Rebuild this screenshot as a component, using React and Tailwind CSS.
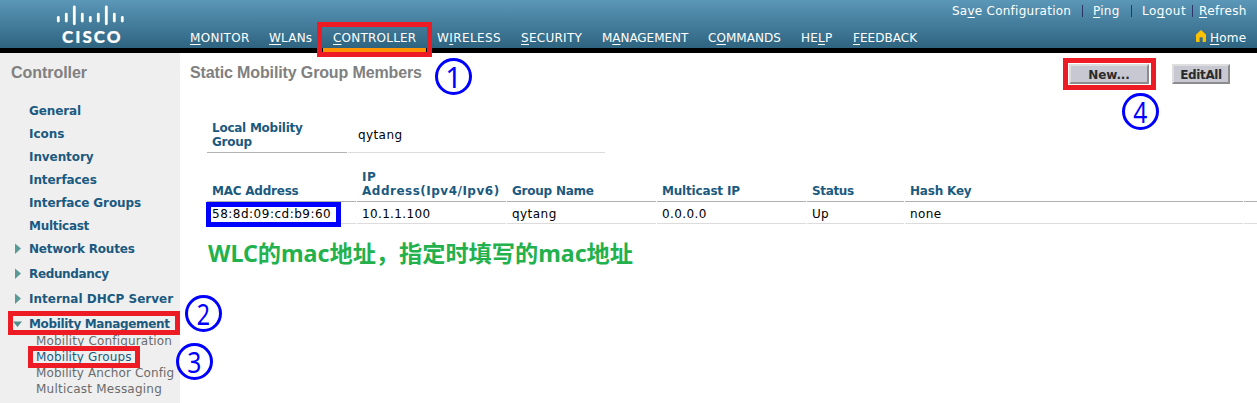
const NAV = [
  { pre: "", key: "M", post: "ONITOR", cls: "w-[79px] tracking-[0.3px]" },
  { pre: "", key: "W", post: "LANs", cls: "w-[64px] tracking-[0.2px]" },
  { pre: "", key: "C", post: "ONTROLLER", cls: "w-[104px] tracking-[0.22px]" },
  { pre: "W", key: "I", post: "RELESS", cls: "w-[84px] tracking-[0.4px]" },
  { pre: "", key: "S", post: "ECURITY", cls: "w-[81px] tracking-[0.28px]" },
  { pre: "M", key: "A", post: "NAGEMENT", cls: "w-[106px] tracking-[-0.05px]" },
  { pre: "C", key: "O", post: "MMANDS", cls: "w-[93px] tracking-[0.05px]" },
  { pre: "HE", key: "L", post: "P", cls: "w-[52px] tracking-[0.2px]" },
  { pre: "", key: "F", post: "EEDBACK", cls: "w-[70px] tracking-[0.05px]" },
];

const LINKS = [
  { label: "General", cls: "tracking-[-0.1px]" },
  { label: "Icons", cls: "tracking-[-0.05px]" },
  { label: "Inventory", cls: "tracking-[-0.08px]" },
  { label: "Interfaces", cls: "tracking-[-0.08px]" },
  { label: "Interface Groups", cls: "tracking-[-0.12px]" },
  { label: "Multicast", cls: "tracking-[-0.28px]" },
];

const GROUPS = [
  { label: "Network Routes", cls: "tracking-[-0.2px]" },
  { label: "Redundancy", cls: "tracking-[-0.35px]" },
  { label: "Internal DHCP Server", cls: "tracking-[0px]" },
  { label: "Mobility Management", cls: "tracking-[-0.35px]", open: true },
];

const SUB = [
  { label: "Mobility Configuration", cls: "tracking-[0.17px] text-[#6b6b6b]" },
  { label: "Mobility Groups", cls: "tracking-[0.12px] text-[#1b5a80]" },
  { label: "Mobility Anchor Config", cls: "tracking-[0.12px] text-[#6b6b6b]" },
  { label: "Multicast Messaging", cls: "tracking-[0.22px] text-[#6b6b6b]" },
];

const COLUMNS = [
  { head: "MAC Address", value: "58:8d:09:cd:b9:60", w: "w-[149px] pl-[5px]", h: "tracking-[-0.23px]", v: "tracking-[0.5px]" },
  { head: "IP Address(Ipv4/Ipv6)", value: "10.1.1.100", w: "w-[149px] pl-[5px]", h: "tracking-[0.5px]", v: "tracking-[0.35px]" },
  { head: "Group Name", value: "qytang", w: "w-[149px] pl-[5px]", h: "tracking-[-0.24px]", v: "tracking-[0.45px]" },
  { head: "Multicast IP", value: "0.0.0.0", w: "w-[149px] pl-[5px]", h: "tracking-[-0.18px]", v: "tracking-[0.4px]" },
  { head: "Status", value: "Up", w: "w-[97px] pl-[5px]", h: "tracking-[-0.35px]", v: "tracking-[0.3px]" },
  { head: "Hash Key", value: "none", w: "w-[338px] pl-[5px]", h: "tracking-[-0.2px]", v: "tracking-[0.4px]" },
  { head: "", value: "", w: "w-[13px]", h: "", v: "" },
];

const UNDER = "underline decoration-1 underline-offset-2";

function HotKey({ pre, k, post }) {
  return (
    <>
      {pre}
      <span className={UNDER}>{k}</span>
      {post}
    </>
  );
}

function Logo() {
  const bars = [
    [58.3, 16, 22.5], [66.3, 12.7, 22.5], [74.3, 5.4, 25.2],
    [82.3, 12.7, 22.5], [90.3, 16, 22.5], [98.3, 12.7, 22.5],
    [106.3, 5.4, 25.2], [114.3, 12.7, 22.5], [122.3, 16, 22.5],
  ];
  return (
    <svg width="190" height="48" className="block shrink-0">
      {bars.map(([x, a, b]) => (
        <line key={x} x1={x} x2={x} y1={a + 1.4} y2={b - 1.4} stroke="#fff" strokeWidth="2.8" strokeLinecap="round" />
      ))}
      <text x="62" y="43" textLength="58.5" fill="#fff" stroke="#fff" strokeWidth="0.2" fontFamily="Lato, sans-serif" fontWeight="900" fontSize="17">
        CISCO
      </text>
    </svg>
  );
}

function Divider({ cls }) {
  return <span className={"h-[12px] w-px bg-[#2b3568] " + cls} />;
}

function Header() {
  return (
    <header className="flex h-[53px] border-b-[5px] border-black bg-linear-to-b from-[#5b97b8] to-[#2e6480] text-[12px] leading-[16px] text-white">
      <Logo />
      <nav className="flex pt-[30px]">
        {NAV.map((n) => (
          <a key={n.post} className={"block shrink-0 whitespace-nowrap " + n.cls}>
            <HotKey pre={n.pre} k={n.key} post={n.post} />
          </a>
        ))}
      </nav>
      <div className="ml-auto flex shrink-0 flex-col items-end pr-[10px] pt-[3px]">
        <div className="flex items-center whitespace-nowrap">
          <a className="w-[130px] tracking-[0.25px]"><HotKey pre="Sa" k="v" post="e Configuration" /></a>
          <Divider cls="mr-[10px]" />
          <a className="w-[38px] tracking-[0.25px]"><HotKey pre="" k="P" post="ing" /></a>
          <Divider cls="mr-[10px]" />
          <a className="w-[50px] tracking-[0.5px]"><HotKey pre="Lo" k="g" post="out" /></a>
          <Divider cls="mr-[6px]" />
          <a className="w-[48px] tracking-[0.35px]"><HotKey pre="" k="R" post="efresh" /></a>
        </div>
        <div className="mt-[11px] flex">
          <svg width="10" height="12" viewBox="0 0 10 12" className="mr-[4px]">
            <path d="M5 0 L10 4.6 V11 Q10 12 9 12 H6.7 V7.2 H3.6 V12 H1 Q0 12 0 11 V4.6 Z" fill="#fcc200" />
          </svg>
          <a className="w-[37px] tracking-[0.2px]"><HotKey pre="" k="H" post="ome" /></a>
        </div>
      </div>
    </header>
  );
}

function Arrow({ open }) {
  return (
    <svg width="29" height="14" className="shrink-0">
      {open ? <path d="M13 3.5 H22 L17.5 9 Z" fill="#4f8f8b" /> : <path d="M15 0.5 L21 5.5 L15 11 Z" fill="#5a9a96" />}
    </svg>
  );
}

function Sidebar() {
  return (
    <aside className="h-[350px] w-[180px] shrink-0 overflow-hidden whitespace-nowrap bg-[#efefef] text-[12px]">
      <h2 className="pl-[11px] pt-[10px] font-['Liberation_Sans'] text-[16px] font-bold leading-[20px] tracking-[-0.05px] text-[#808080]">Controller</h2>
      <ul className="pt-[17px] font-bold text-[#1b5a80]">
        {LINKS.map((l) => (
          <li key={l.label} className={"h-[23px] pl-[29px] leading-[23px] " + l.cls}>{l.label}</li>
        ))}
        {GROUPS.map((g) => (
          <li key={g.label} className={"flex h-[23px] items-center leading-[23px] " + (g.open ? "" : "mb-[2px]")}>
            <Arrow open={g.open} />
            <span className={g.cls}>{g.label}</span>
          </li>
        ))}
      </ul>
      <ul className="-mt-[3px] pl-[36px] leading-[16px]">
        {SUB.map((s) => (
          <li key={s.label} className={s.cls}>{s.label}</li>
        ))}
      </ul>
    </aside>
  );
}

function Button({ label, cls }) {
  return (
    <button className={"flex h-[20px] items-center justify-center border-2 border-b-[#8c8c8c] border-l-[#dedede] border-r-[#8c8c8c] border-t-[#dedede] bg-[#c8c8d3] text-[12px] font-bold leading-[16px] text-[#2b2b2b] " + cls}>
      <span className="pt-[2px]">{label}</span>
    </button>
  );
}

function Main() {
  return (
    <main className="w-[1077px] bg-white text-[12px]">
      <div className="flex h-[66px] items-start pl-[10px] pr-[27px] pt-[10px]">
        <h1 className="whitespace-nowrap font-['Liberation_Sans'] text-[16px] font-bold leading-[20px] tracking-[-0.13px] text-[#808080]">
          Static Mobility Group Members
        </h1>
        <Button label="New..." cls="ml-auto mr-[23px] mt-px w-[80px] tracking-[-0.1px]" />
        <Button label="EditAll" cls="mt-px w-[58px] tracking-[-0.35px]" />
      </div>
      <div className="flex gap-px pl-[27px]">
        <div className="h-[34px] w-[140px] border-b border-[#b4b4b4] pl-[5px] pt-[2px] font-bold leading-[14px] tracking-[-0.25px] text-[#1b5a80]">
          Local Mobility
          <br />
          Group
        </div>
        <div className="h-[34px] w-[257px] border-b border-[#dcdcdc] pl-[10px] pt-[9px] leading-[14px] tracking-[0.4px]">qytang</div>
      </div>
      <div className="mt-[14px] flex gap-px pl-[27px]">
        {COLUMNS.map((c, i) => (
          <div key={i} className={"flex h-[35px] shrink-0 items-end border-b border-[#b0b0b0] pb-[3px] font-bold leading-[14px] text-[#1b5a80] " + c.w + " " + c.h}>
            <span>{c.head}</span>
          </div>
        ))}
      </div>
      <div className="flex gap-px pl-[27px]">
        {COLUMNS.map((c, i) => (
          <div key={i} className={"h-[22px] shrink-0 whitespace-nowrap border-b border-[#dcdcdc] pt-[5px] leading-[14px] text-black " + c.w + " " + c.v}>
            {c.value}
          </div>
        ))}
      </div>
      <p lang="zh-CN" className="whitespace-nowrap pl-[28px] pt-[12px] font-['Noto_Sans','Noto_Sans_CJK_SC',sans-serif] text-[23.2px] font-bold leading-[34px] text-[#22b14c]">
        WLC的mac地址，指定时填写的mac地址
      </p>
    </main>
  );
}

function Step({ n, cls, digit }) {
  return (
    <div className={"absolute flex h-[37px] w-[37px] items-center justify-center rounded-full border-[3px] border-[#0000ff] font-['Noto_Sans'] text-[29px] font-normal leading-[30px] text-[#0000ff] " + cls}>
      <span className={"block " + digit}>{n}</span>
    </div>
  );
}

export default function App() {
  return (
    <div className="relative h-[403px] w-[1257px] overflow-hidden bg-white font-['DejaVu_Sans',sans-serif]">
      <Header />
      <div className="flex">
        <Sidebar />
        <Main />
      </div>
      <div className="absolute left-[323px] top-[48px] h-[4px] w-[103px] bg-[#ff9200]" />
      <div className="absolute left-[317px] top-[22px] h-[35px] w-[115px] border-[5px] border-[#ed1c24]" />
      <div className="absolute left-[1063px] top-[58px] h-[32px] w-[93px] border-[5px] border-[#ed1c24]" />
      <div className="absolute left-[8px] top-[311px] h-[24px] w-[172px] border-[5px] border-[#ed1c24]" />
      <div className="absolute left-[28px] top-[346px] h-[22px] w-[112px] border-[5px] border-[#ed1c24]" />
      <div className="absolute left-[206px] top-[202px] h-[25px] w-[135px] border-[5px] border-[#0000ff]" />
      <Step n="1" cls="left-[435px] top-[58px]" digit="scale-x-100" />
      <Step n="2" cls="left-[185px] top-[295px]" digit="scale-x-[0.8]" />
      <Step n="3" cls="left-[176px] top-[343px]" digit="scale-x-[0.85]" />
      <Step n="4" cls="left-[1122px] top-[93px]" digit="scale-x-[0.85]" />
    </div>
  );
}
